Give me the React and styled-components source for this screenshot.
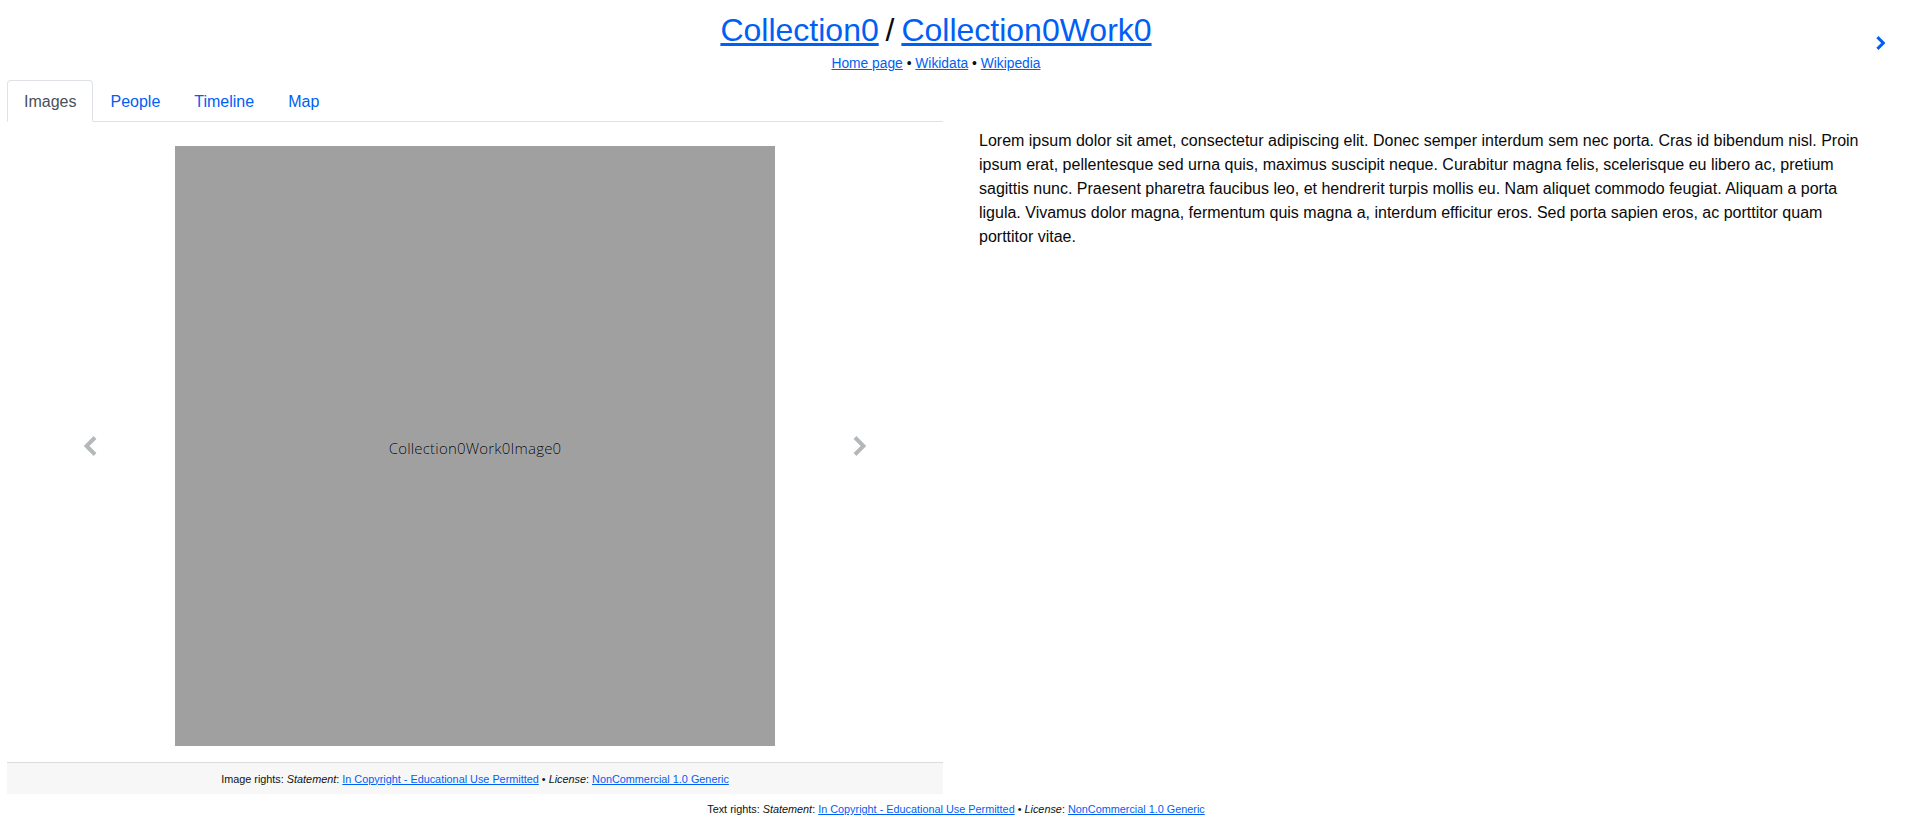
import React from "react";
import styled, { createGlobalStyle } from "styled-components";

const GlobalStyle = createGlobalStyle`
  html, body {
    margin: 0;
    padding: 0;
    background: #fff;
  }
  body {
    font-family: "Liberation Sans", Arial, sans-serif;
    font-size: 16px;
    line-height: 24px;
    color: #0a0a0a;
  }
  a {
    color: #0060f5;
    text-decoration: underline;
  }
`;

const Page = styled.div`
  width: 1912px;
  height: 829px;
  overflow: hidden;
`;

const Header = styled.header`
  display: flex;
  height: 80px;
`;

const TitleBlock = styled.div`
  flex: 1;
  text-align: center;
  padding-top: 10px;
`;

const Title = styled.h1`
  margin: 0;
  font-size: 32px;
  line-height: 40px;
  font-weight: 400;
  word-spacing: -2px;
`;

const SubLinks = styled.div`
  font-size: 13.8px;
  line-height: 16px;
  margin-top: 6px;
`;

const NextWork = styled.a`
  width: 40px;
  padding: 36px 0 0 4px;
  box-sizing: border-box;

  svg {
    display: block;
  }
`;

const Columns = styled.div`
  display: grid;
  grid-template-columns: 936px 1fr;
  padding-left: 7px;
`;

const TabList = styled.nav`
  display: flex;
  height: 42px;
  box-sizing: border-box;
  border-bottom: 1px solid #dee2e6;
`;

const Tab = styled.a`
  box-sizing: border-box;
  height: 42px;
  padding: 9px 16px 7px;
  text-decoration: none;
  border: 1px solid ${(p) => (p.$active ? "#dee2e6" : "transparent")};
  border-bottom-color: ${(p) => (p.$active ? "#fff" : "transparent")};
  border-radius: 4px 4px 0 0;
  color: ${(p) => (p.$active ? "#495057" : "#0060f5")};
`;

const Carousel = styled.div`
  display: flex;
  align-items: center;
  margin-top: 24px;
`;

const Control = styled.div`
  flex: 1;
  display: flex;
  justify-content: center;

  svg {
    display: block;
    margin-left: ${(p) => (p.$side === "left" ? "-2px" : "0")};
  }
`;

const Placeholder = styled.div`
  width: 600px;
  height: 600px;
  padding-top: 3px;
  box-sizing: border-box;
  background: #a0a0a0;
  display: flex;
  align-items: center;
  justify-content: center;
  font-family: "Open Sans", sans-serif;
  font-weight: 300;
  font-size: 15px;
  letter-spacing: 0.2px;
  color: #000;
  text-shadow: 0 0 1px rgba(255, 255, 255, 0.45);
`;

const CardFooter = styled.div`
  margin-top: 16px;
  height: 32px;
  box-sizing: border-box;
  border-top: 1px solid #dcdcdc;
  background: #f7f7f7;
  display: flex;
  align-items: center;
  justify-content: center;
`;

const Rights = styled.small`
  font-size: 10.85px;
  line-height: 16px;
  color: #111;
`;

const Article = styled.p`
  margin: 0;
  padding: 49px 33px 0 36px;
`;

const PageFooter = styled.div`
  text-align: center;
  margin-top: 6px;
  line-height: 16px;
`;

const Chevron = ({ dir, color, width, height, stroke }) => (
  <svg width={width} height={height} viewBox="0 0 13 20" fill="none" aria-hidden="true">
    <polyline
      points={dir === "left" ? "11,1.5 2.5,10 11,18.5" : "2,1.5 10.5,10 2,18.5"}
      stroke={color}
      strokeWidth={stroke}
      vectorEffect="non-scaling-stroke"
    />
  </svg>
);

const RightsText = ({ label }) => (
  <Rights>
    {label} rights: <em>Statement</em>: <a href="#s">In Copyright - Educational Use Permitted</a> •{" "}
    <em>License</em>: <a href="#l">NonCommercial 1.0 Generic</a>
  </Rights>
);

export default function App() {
  return (
    <Page>
      <GlobalStyle />
      <Header>
        <TitleBlock>
          <Title>
            <a href="#c">Collection0</a> / <a href="#w">Collection0Work0</a>
          </Title>
          <SubLinks>
            <a href="#h">Home page</a> • <a href="#d">Wikidata</a> • <a href="#p">Wikipedia</a>
          </SubLinks>
        </TitleBlock>
        <NextWork href="#n">
          <Chevron dir="right" color="#0060f5" width={9} height={14} stroke={3} />
        </NextWork>
      </Header>
      <Columns>
        <section>
          <TabList>
            <Tab $active href="#images">Images</Tab>
            <Tab href="#people">People</Tab>
            <Tab href="#timeline">Timeline</Tab>
            <Tab href="#map">Map</Tab>
          </TabList>
          <Carousel>
            <Control $side="left">
              <Chevron dir="left" color="#b4b8ba" width={13} height={20} stroke={4} />
            </Control>
            <Placeholder>Collection0Work0Image0</Placeholder>
            <Control $side="right">
              <Chevron dir="right" color="#b4b8ba" width={13} height={20} stroke={4} />
            </Control>
          </Carousel>
          <CardFooter>
            <RightsText label="Image" />
          </CardFooter>
        </section>
        <Article>
          Lorem ipsum dolor sit amet, consectetur adipiscing elit. Donec semper interdum sem nec porta. Cras id bibendum nisl. Proin ipsum erat, pellentesque sed urna quis, maximus suscipit neque. Curabitur magna felis, scelerisque eu libero ac, pretium sagittis nunc. Praesent pharetra faucibus leo, et hendrerit turpis mollis eu. Nam aliquet commodo feugiat. Aliquam a porta ligula. Vivamus dolor magna, fermentum quis magna a, interdum efficitur eros. Sed porta sapien eros, ac porttitor quam porttitor vitae.
        </Article>
      </Columns>
      <PageFooter>
        <RightsText label="Text" />
      </PageFooter>
    </Page>
  );
}
